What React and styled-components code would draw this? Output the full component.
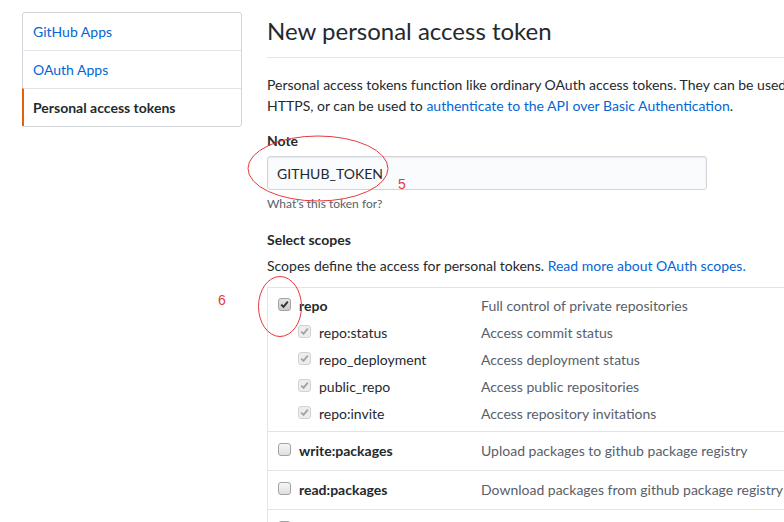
import styled, { createGlobalStyle } from 'styled-components'

const GlobalStyle = createGlobalStyle`
  body {
    margin: 0;
    background: #fff;
    color: #24292e;
    font-family: Lato, 'Liberation Sans', sans-serif;
    font-size: 14px;
    line-height: 1.5;
    overflow: hidden;
  }
`

const menuItems = [
  { id: 1, name: 'GitHub Apps' },
  { id: 2, name: 'OAuth Apps' },
  { id: 3, name: 'Personal access tokens', active: true },
]

const scopes = [
  {
    name: 'repo',
    desc: 'Full control of private repositories',
    checked: true,
    children: [
      { name: 'repo:status', desc: 'Access commit status' },
      { name: 'repo_deployment', desc: 'Access deployment status' },
      { name: 'public_repo', desc: 'Access public repositories' },
      { name: 'repo:invite', desc: 'Access repository invitations' },
    ],
  },
  { name: 'write:packages', desc: 'Upload packages to github package registry' },
  { name: 'read:packages', desc: 'Download packages from github package registry' },
  { name: 'delete:packages', desc: 'Delete packages from github package registry' },
]

const Page = styled.div`
  display: flex;
  align-items: flex-start;
  gap: 25px;
  padding: 12px 0 0 22px;
  width: max-content;
`

const Menu = styled.nav`
  box-sizing: border-box;
  width: 220px;
  border: 1px solid #d1d5da;
  border-radius: 3px;
  background: #fff;
`

const MenuItem = styled.a`
  display: block;
  height: 37px;
  line-height: 37px;
  padding: 0 9px;
  border-top: 1px solid #e1e4e8;
  border-left: 2px solid ${({ $active }) => ($active ? '#e36209' : 'transparent')};
  margin-left: -1px;
  color: ${({ $active }) => ($active ? '#24292e' : '#0366d6')};
  font-weight: ${({ $active }) => ($active ? 700 : 400)};
  text-decoration: none;

  &:first-child {
    border-top: none;
  }
`

const Main = styled.main`
  width: 740px;
`

const Title = styled.h2`
  margin: 4px 0 0;
  padding-bottom: 11px;
  font-size: 24px;
  font-weight: 400;
  line-height: 30px;
  border-bottom: 1px solid #e1e4e8;
`

const Intro = styled.p`
  margin: 16px 0 0;
  line-height: 21px;
`

const Link = styled.a`
  color: #0366d6;
  text-decoration: none;
`

const FieldGroup = styled.div`
  position: relative;
  margin-top: ${({ $top }) => $top}px;
`

const Label = styled.div`
  font-weight: 700;
  line-height: 21px;
`

const TextInput = styled.div`
  box-sizing: border-box;
  width: 440px;
  height: 34px;
  margin-top: 5px;
  padding: 0 9px;
  display: flex;
  align-items: center;
  background: #fafbfc;
  border: 1px solid #d1d5da;
  border-radius: 3px;
  box-shadow: inset 0 1px 2px rgba(27, 31, 35, 0.075);
`

const Hint = styled.div`
  margin-top: 5px;
  font-size: 12px;
  line-height: 18px;
  color: #586069;
`

const Text = styled.p`
  margin: 5px 0 0;
  line-height: 21px;
`

const ScopeBox = styled.div`
  position: relative;
  margin-top: 11px;
  border-left: 1px solid #e1e4e8;
  border-top: 1px solid #e1e4e8;
`

const ScopeGroup = styled.div`
  padding: ${({ $pad }) => $pad};
  border-bottom: 1px solid #e1e4e8;
  display: flex;
  flex-direction: column;
  gap: 6px;
`

const ScopeRow = styled.div`
  display: flex;
  align-items: center;
  height: 21px;
  padding-left: ${({ $indent }) => $indent}px;
`

const ScopeName = styled.span`
  display: flex;
  align-items: center;
  gap: 8px;
  width: ${({ $indent }) => 203 - $indent}px;
  font-weight: ${({ $bold }) => ($bold ? 700 : 400)};
`

const ScopeDesc = styled.span`
  color: #586069;
`

const Box = styled.span`
  box-sizing: border-box;
  display: inline-flex;
  align-items: center;
  justify-content: center;
  width: 13px;
  height: 13px;
  margin-top: -2px;
  border-radius: 3px;
  border: 1px solid ${({ $disabled }) => ($disabled ? '#d2d2d2' : '#a3a3a3')};
  background: ${({ $disabled, $checked }) =>
    $disabled
      ? '#ededed'
      : $checked
        ? 'linear-gradient(#e4e4e4, #cbcbcb)'
        : 'linear-gradient(#f6f6f6, #dfdfdf)'};
`

const Annotation = styled.span`
  position: absolute;
  left: ${({ $x }) => $x}px;
  top: ${({ $y }) => $y}px;
  color: #e8383d;
  font-size: 14px;
  line-height: 14px;
  font-family: 'Liberation Sans', sans-serif;
`

const Ring = styled.svg`
  position: absolute;
  left: ${({ $x }) => $x}px;
  top: ${({ $y }) => $y}px;
  overflow: visible;
  pointer-events: none;
`

const Checkbox = ({ checked, disabled }) => (
  <Box $checked={checked} $disabled={disabled}>
    {checked && (
      <svg width="9" height="9" viewBox="0 0 9 9">
        <path
          d="M1.2 4.6 L3.5 6.8 L7.8 1.6"
          fill="none"
          stroke={disabled ? '#a5a5a5' : '#333'}
          strokeWidth="1.9"
        />
      </svg>
    )}
  </Box>
)

const Scope = ({ scope, indent = 0, bold, checked, disabled }) => (
  <ScopeRow $indent={indent}>
    <ScopeName $indent={indent} $bold={bold}>
      <Checkbox checked={checked} disabled={disabled} />
      {scope.name}
    </ScopeName>
    <ScopeDesc>{scope.desc}</ScopeDesc>
  </ScopeRow>
)

const App = () => {
  return (
    <>
      <GlobalStyle />
      <Page>
        <Menu>
          {menuItems.map(item => (
            <MenuItem key={item.id} $active={item.active}>
              {item.name}
            </MenuItem>
          ))}
        </Menu>
        <Main>
          <Title>New personal access token</Title>
          <Intro>
            Personal access tokens function like ordinary OAuth access tokens. They can be used
            instead of a password for Git over HTTPS, or can be used to{' '}
            <Link>authenticate to the API over Basic Authentication</Link>.
          </Intro>

          <FieldGroup $top={14}>
            <Label>Note</Label>
            <TextInput>GITHUB_TOKEN</TextInput>
            <Hint>What’s this token for?</Hint>
            {/* hand-drawn annotation */}
            <Ring $x={-20} $y={5} width="142" height="67">
              <ellipse cx="71" cy="33.5" rx="70" ry="32.5" fill="none" stroke="#e8383d" strokeWidth="1" />
            </Ring>
            <Annotation $x={131} $y={47}>5</Annotation>
          </FieldGroup>

          <FieldGroup $top={16}>
            <Label>Select scopes</Label>
            <Text>
              Scopes define the access for personal tokens.{' '}
              <Link>Read more about OAuth scopes.</Link>
            </Text>
            <ScopeBox>
              {scopes.map(scope => (
                <ScopeGroup key={scope.name} $pad={scope.children ? '7px 10px' : '8px 10px 9px'}>
                  <Scope scope={scope} bold checked={scope.checked} />
                  {scope.children &&
                    scope.children.map(child => (
                      <Scope key={child.name} scope={child} indent={20} checked disabled />
                    ))}
                </ScopeGroup>
              ))}
              <Ring $x={-10} $y={-12} width="44" height="61">
                <ellipse cx="22" cy="30.5" rx="21.5" ry="30" fill="none" stroke="#e8383d" strokeWidth="1" />
              </Ring>
              <Annotation $x={-50} $y={5}>6</Annotation>
            </ScopeBox>
          </FieldGroup>
        </Main>
      </Page>
    </>
  )
}

export default App
